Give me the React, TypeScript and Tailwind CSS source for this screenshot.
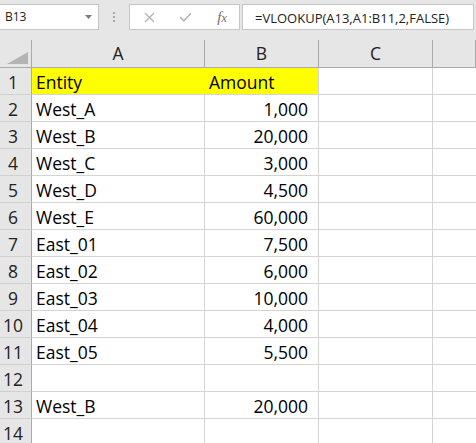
import React from "react"

const rows: [string, string][] = [
  ["West_A", "1,000"],
  ["West_B", "20,000"],
  ["West_C", "3,000"],
  ["West_D", "4,500"],
  ["West_E", "60,000"],
  ["East_01", "7,500"],
  ["East_02", "6,000"],
  ["East_03", "10,000"],
  ["East_04", "4,000"],
  ["East_05", "5,500"],
  ["", ""],
  ["West_B", "20,000"],
  ["", ""],
]

const font = { fontFamily: '"Open Sans", "Liberation Sans", sans-serif' }

function Toolbar() {
  return (
    <div className="h-[40px] flex items-start pt-[4px] bg-[#e6e6e6]" style={font}>
      {/* name box */}
      <div className="w-[99px] h-[26px] bg-white border border-[#c6c6c6] border-l-0 flex items-center justify-between pl-[5px] pr-[6px]">
        <span className="text-[12px] text-[#222] leading-none">B13</span>
        <svg width="7" height="4" viewBox="0 0 7 4">
          <path d="M0 0 L7 0 L3.5 4 Z" fill="#7a7a7a" />
        </svg>
      </div>
      {/* grip dots */}
      <div className="w-[30px] h-[26px] flex flex-col items-center justify-center gap-[2px]">
        <span className="w-[2px] h-[2px] bg-[#a8a8a8]" />
        <span className="w-[2px] h-[2px] bg-[#a8a8a8]" />
        <span className="w-[2px] h-[2px] bg-[#a8a8a8]" />
      </div>
      {/* cancel / enter / fx */}
      <div className="w-[111px] h-[26px] bg-white border border-[#c6c6c6] flex items-center">
        <div className="w-[36px] flex justify-center pl-[2px]">
          <svg width="11" height="11" viewBox="0 0 11 11">
            <path d="M1 1 L10 10 M10 1 L1 10" stroke="#b5b5b5" strokeWidth="1.4" fill="none" />
          </svg>
        </div>
        <div className="w-[36px] flex justify-center pl-[3px]">
          <svg width="13" height="10" viewBox="0 0 13 10">
            <path d="M1 5 L4.8 8.8 L12 1.2" stroke="#b5b5b5" strokeWidth="1.6" fill="none" />
          </svg>
        </div>
        <div className="flex-1 flex justify-center pl-[3px]">
          <span
            className="italic text-[15px] leading-none text-[#6e6e6e]"
            style={{ fontFamily: '"Liberation Serif", serif' }}
          >
            f<span className="text-[12px]">x</span>
          </span>
        </div>
      </div>
      {/* formula */}
      <div className="ml-[2px] w-[232px] h-[26px] bg-white border border-[#c6c6c6] flex items-center pl-[12px] pt-[2px]">
        <span className="text-[13px] leading-none text-[#222]">=VLOOKUP(A13,A1:B11,2,FALSE)</span>
      </div>
    </div>
  )
}

const cols = "grid grid-cols-[32px_173px_114px_114px_1fr]"

function HeaderRow() {
  return (
    <div className={`${cols} h-[28px] bg-[#e6e6e6]`} style={font}>
      <div className="border-r border-b border-[#ababab] flex items-end justify-end pr-[3px] pb-[3px]">
        <svg width="21" height="12" viewBox="0 0 21 12">
          <path d="M21 0 L21 12 L0 12 Z" fill="#b4b4b4" />
        </svg>
      </div>
      {["A", "B", "C", ""].map((c, i) => (
        <div
          key={i}
          className="border-r border-b border-[#ababab] flex items-center justify-center text-[17.5px] leading-none text-[#222]"
        >
          {c}
        </div>
      ))}
    </div>
  )
}

function DataRow({ n, a, b }: { n: number; a: string; b: string }) {
  const head = n === 1
  return (
    <div className={`${cols} h-[27px] text-[17.5px] leading-none text-black`} style={font}>
      <div className="bg-[#e6e6e6] border-r border-[#ababab] border-b border-b-[#d0d0d0] flex items-end justify-center pr-[5px] pb-[3px] text-[#222]">
        {n}
      </div>
      <div
        className={
          head
            ? "bg-[#ffff00] border-b border-[#d4d4d4] flex items-end pl-[4px] pb-[3px]"
            : "border-r border-b border-[#d4d4d4] flex items-end pl-[4px] pb-[3px]"
        }
      >
        {head ? "Entity" : a}
      </div>
      <div
        className={
          head
            ? "bg-[#ffff00] border-r border-b border-[#d4d4d4] flex items-end pl-[4px] pb-[3px]"
            : "border-r border-b border-[#d4d4d4] flex items-end justify-end pr-[10px] pb-[3px]"
        }
      >
        {head ? "Amount" : b}
      </div>
      <div className="border-r border-b border-[#d4d4d4]" />
      <div className="border-b border-[#d4d4d4]" />
    </div>
  )
}

export default function App() {
  return (
    <div className="w-[476px] h-[443px] overflow-hidden bg-white">
      <Toolbar />
      <HeaderRow />
      <DataRow n={1} a="" b="" />
      {rows.map((r, i) => (
        <DataRow key={i} n={i + 2} a={r[0]} b={r[1]} />
      ))}
    </div>
  )
}
